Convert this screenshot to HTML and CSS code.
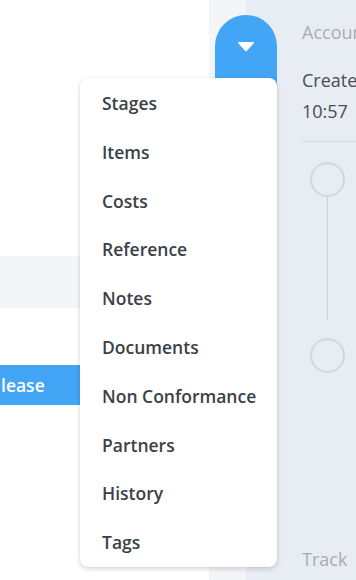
FILE: index.html
```html
<!DOCTYPE html>
<html lang="en">
<head>
  <meta charset="UTF-8" />
  <meta name="viewport" content="width=device-width, initial-scale=1.0"/>
  <title>Order - Actions</title>
  <link rel="stylesheet" href="styles.css">
</head>
<body>

<div class="page">
  <div class="main">
    <div class="band"></div>
    <div class="release-row">
      <button class="btn-release">lease</button>
    </div>
  </div>

  <div class="gutter"></div>

  <div class="side">
    <div class="side-title">Account</div>
    <div class="side-meta">Created<br>10:57</div>
    <div class="side-rule"></div>
    <div class="timeline">
      <div class="dot"></div>
      <div class="stem"></div>
      <div class="dot"></div>
    </div>
    <div class="side-title track">Track</div>
  </div>

  <!-- dropdown toggle + menu sit over the page -->
  <div class="tab">
    <svg width="18" height="11" viewBox="0 0 18 11">
      <path d="M1.5 1 H16.5 Q17.6 1 16.9 1.9 L9.8 10 Q9 10.8 8.2 10 L1.1 1.9 Q0.4 1 1.5 1 Z" fill="#fff"/>
    </svg>
  </div>

  <ul class="menu">
    <li>Stages</li>
    <li>Items</li>
    <li>Costs</li>
    <li>Reference</li>
    <li>Notes</li>
    <li>Documents</li>
    <li>Non Conformance</li>
    <li>Partners</li>
    <li>History</li>
    <li>Tags</li>
  </ul>
</div>

</body>
</html>
```

FILE: styles.css
```css
body {
  margin: 0;
  padding: 0;
  font-family: "Open Sans", Arial, sans-serif;
  background: #fff;
  overflow: hidden;
}
.page {
  position: relative;
  display: flex;
  width: 356px;
  height: 580px;
  overflow: hidden;
}
.main {
  width: 209px;
  flex-shrink: 0;
  background: #fff;
  padding-top: 256px;
}
.band {
  height: 52px;
  background: #f3f5f8;
}
.release-row {
  padding-top: 57px;
}
.btn-release {
  display: block;
  width: 80px;
  height: 40px;
  border: none;
  margin: 0;
  padding: 0 0 0 1px;
  text-align: left;
  background: #42a5f5;
  color: #fff;
  font-family: "Open Sans", Arial, sans-serif;
  font-weight: 600;
  font-size: 17.5px;
}
.gutter {
  width: 37px;
  flex-shrink: 0;
  background: #f3f5f8;
}
.side {
  flex: 1;
  min-width: 0;
  overflow: hidden;
  background: #e8ecf3;
  padding: 20px 0 0 56px;
  display: flex;
  flex-direction: column;
}
.side-title {
  font-size: 18px;
  color: #a8acb2;
  white-space: nowrap;
  line-height: 24px;
}
.side-meta {
  margin-top: 21px;
  font-size: 18px;
  line-height: 31px;
  color: #4a4d53;
  white-space: nowrap;
}
.side-rule {
  margin-top: 14px;
  height: 1px;
  flex-shrink: 0;
  background: #d3d6dc;
}
.timeline {
  margin-top: 20px;
  width: 50px;
  display: flex;
  flex-direction: column;
  align-items: center;
}
.dot {
  width: 31px;
  height: 31px;
  flex-shrink: 0;
  border: 2px solid #d4d7dc;
  border-radius: 50%;
}
.stem {
  width: 1px;
  height: 124px;
  flex-shrink: 0;
  margin-bottom: 17px;
  background: #ced1d6;
}
.track {
  margin-top: 174px;
}
.tab {
  position: absolute;
  left: 215px;
  top: 15px;
  width: 62px;
  height: 90px;
  background: #42a5f5;
  border-radius: 31px 31px 0 0;
  display: flex;
  justify-content: center;
  padding-top: 26px;
  box-sizing: border-box;
}
.tab svg {
  display: block;
}
.menu {
  position: absolute;
  left: 80px;
  top: 78px;
  width: 197px;
  margin: 0;
  padding: 1px 0 0;
  list-style: none;
  background: #fff;
  border-radius: 8px;
  box-shadow: 0 2px 5px rgba(0, 0, 0, 0.16), 0 0 1px rgba(0, 0, 0, 0.12);
}
.menu li {
  padding-left: 22px;
  line-height: 48.8px;
  font-size: 17.5px;
  font-weight: 600;
  color: #3b3f48;
  white-space: nowrap;
}
```
